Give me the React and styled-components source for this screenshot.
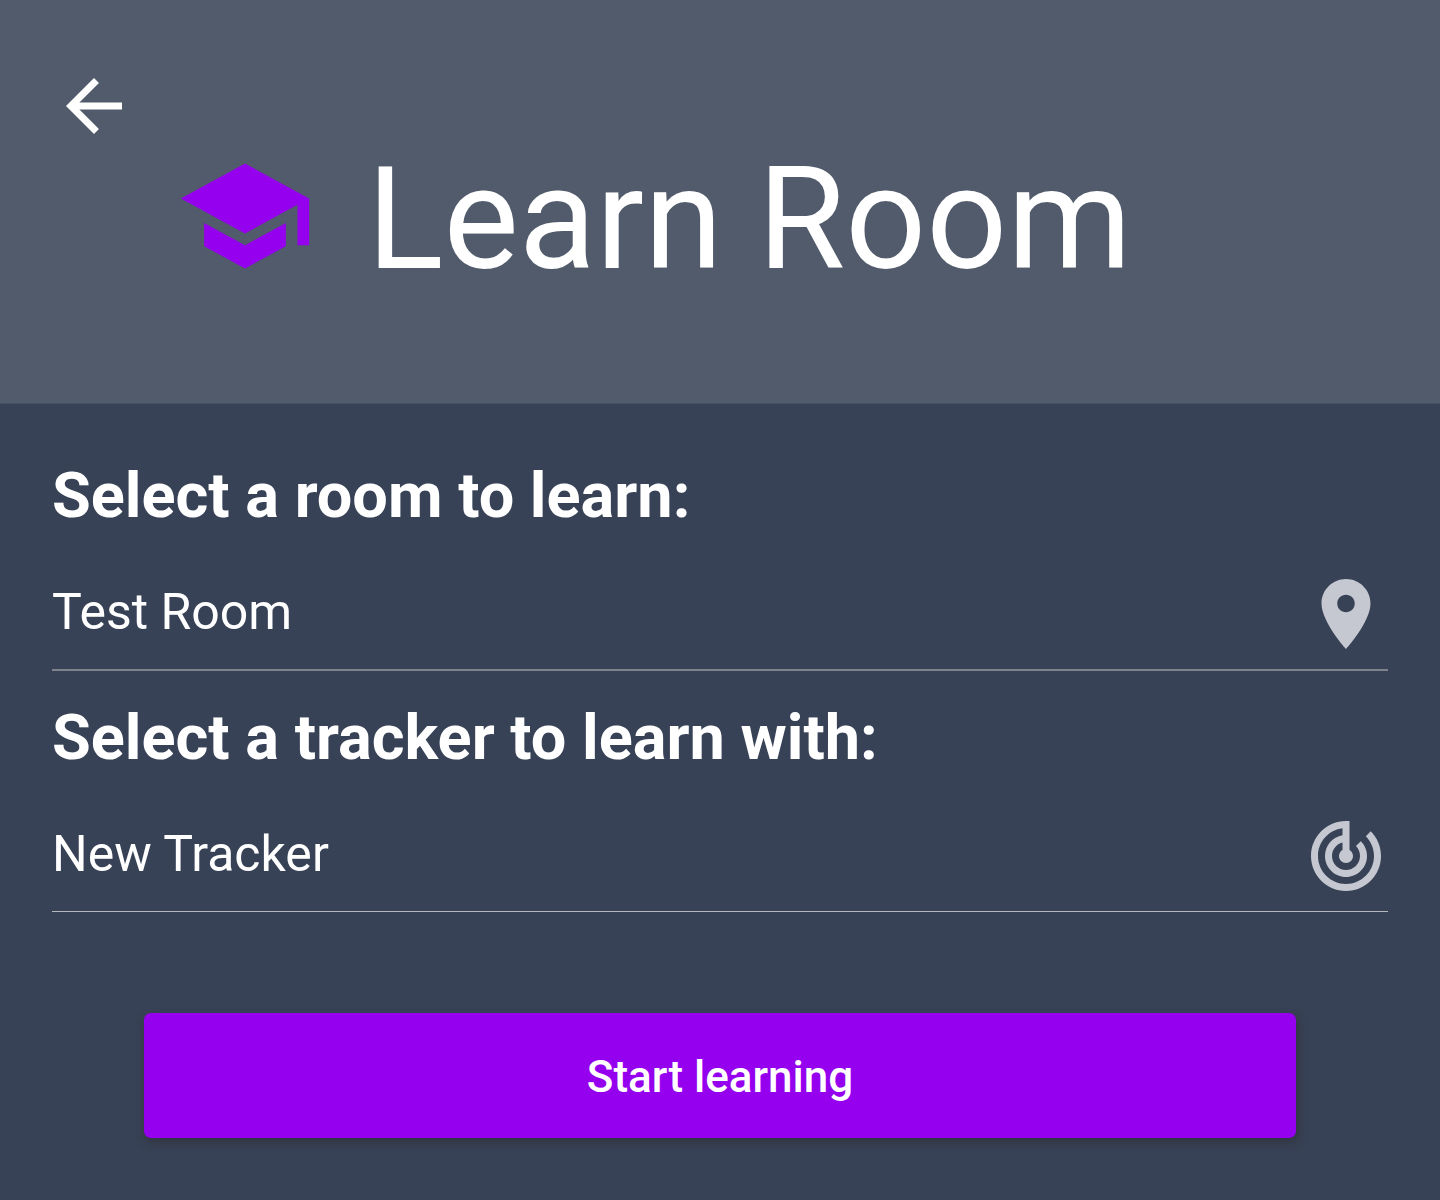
import React, { useState } from "react";
import styled, { createGlobalStyle } from "styled-components";

const GlobalStyle = createGlobalStyle`
  * { box-sizing: border-box; }
  body {
    margin: 0;
    background: #384256;
    color: #fff;
    font-family: Roboto, "Liberation Sans", sans-serif;
  }
`;

const Page = styled.div`
  display: flex;
  flex-direction: column;
  min-height: 100vh;
`;

const Header = styled.header`
  display: flex;
  flex-direction: column;
  align-items: flex-start;
  padding: 64px 52px 109px;
  background: #525b6b;
  border-bottom: 1px solid #465063;
`;

const BackButton = styled.button`
  display: flex;
  padding: 0;
  border: 0;
  background: none;
  color: inherit;
  cursor: pointer;
`;

const TitleRow = styled.div`
  display: flex;
  gap: 52px;
  padding-left: 123px;
  margin-top: -2px;
  color: #9500ee;
`;

const Title = styled.h1`
  margin: 0;
  color: #fff;
  font-size: 142px;
  line-height: 148px;
  font-weight: 400;
`;

const Icon = styled.svg`
  display: block;
  flex: none;
  width: ${(p) => p.$size}px;
  height: ${(p) => p.$size}px;
  fill: currentColor;
`;

const Form = styled.form`
  display: flex;
  flex-direction: column;
  gap: 31px;
  padding: 56px 52px 60px;
`;

const Field = styled.div`
  display: flex;
  flex-direction: column;
  gap: 39px;
`;

const Label = styled.label`
  font-size: 63px;
  line-height: 72px;
  font-weight: 700;
`;

const Control = styled.div`
  box-sizing: content-box;
  display: flex;
  align-items: center;
  min-height: 86px;
  padding-bottom: 12px;
  border-bottom: ${(p) => (p.$thick ? "2px solid #7e838c" : "1px solid #b4b7be")};
  color: #c5c8d0;
`;

const Input = styled.input`
  flex: 1;
  min-width: 0;
  padding: 0 0 4px;
  border: 0;
  outline: 0;
  background: none;
  color: #fff;
  font-family: inherit;
  font-size: 50px;
  line-height: 60px;
`;

const Submit = styled.button`
  align-self: center;
  width: 80vw;
  height: 125px;
  margin-top: 70px;
  padding: 2px 0 0;
  border: 0;
  border-radius: 7px;
  background: #9500ee;
  box-shadow: 2px 4px 8px rgba(40, 40, 40, 0.5);
  color: #fff;
  font-family: inherit;
  font-size: 44px;
  font-weight: 500;
  cursor: pointer;
`;

const PATHS = {
  back: "M20 11H7.83l5.59-5.59L12 4l-8 8 8 8 1.41-1.41L7.83 13H20v-2z",
  school: "M5 13.18v4L12 21l7-3.82v-4L12 17l-7-3.82zM12 3L1 9l11 6 9-4.91V17h2V9L12 3z",
  place:
    "M12 2C8.13 2 5 5.13 5 9c0 5.25 7 13 7 13s7-7.75 7-13c0-3.87-3.13-7-7-7zm0 9.5c-1.38 0-2.5-1.12-2.5-2.5s1.12-2.5 2.5-2.5 2.5 1.12 2.5 2.5-1.12 2.5-2.5 2.5z",
  tracker:
    "M19.07 4.93l-1.41 1.41C19.1 7.79 20 9.79 20 12c0 4.42-3.58 8-8 8s-8-3.58-8-8c0-4.08 3.05-7.44 7-7.93v2.02C8.16 6.57 6 9.03 6 12c0 3.31 2.69 6 6 6s6-2.69 6-6c0-1.66-.67-3.16-1.76-4.24l-1.41 1.41C15.55 9.9 16 10.9 16 12c0 2.21-1.79 4-4 4s-4-1.79-4-4c0-1.86 1.28-3.41 3-3.86v2.14c-.6.35-1 .98-1 1.72 0 1.1.9 2 2 2s2-.9 2-2c0-.74-.4-1.38-1-1.72V2h-1C6.48 2 2 6.48 2 12s4.48 10 10 10 10-4.48 10-10c0-2.76-1.12-5.26-2.93-7.07z",
};

function Glyph({ name, size = 84 }) {
  return (
    <Icon $size={size} viewBox="0 0 24 24" aria-hidden="true">
      <path d={PATHS[name]} />
    </Icon>
  );
}

function PickField({ id, label, initial, icon, thick }) {
  const [value, setValue] = useState(initial);
  return (
    <Field>
      <Label htmlFor={id}>{label}</Label>
      <Control $thick={thick}>
        <Input id={id} type="text" value={value} onChange={(e) => setValue(e.target.value)} />
        <Glyph name={icon} />
      </Control>
    </Field>
  );
}

export default function App() {
  return (
    <Page>
      <GlobalStyle />
      <Header>
        <BackButton type="button" aria-label="Back">
          <Glyph name="back" />
        </BackButton>
        <TitleRow>
          <Glyph name="school" size={140} />
          <Title>Learn Room</Title>
        </TitleRow>
      </Header>
      <Form onSubmit={(e) => e.preventDefault()}>
        <PickField id="room" label="Select a room to learn:" initial="Test Room" icon="place" thick />
        <PickField id="tracker" label="Select a tracker to learn with:" initial="New Tracker" icon="tracker" />
        <Submit type="submit">Start learning</Submit>
      </Form>
    </Page>
  );
}
